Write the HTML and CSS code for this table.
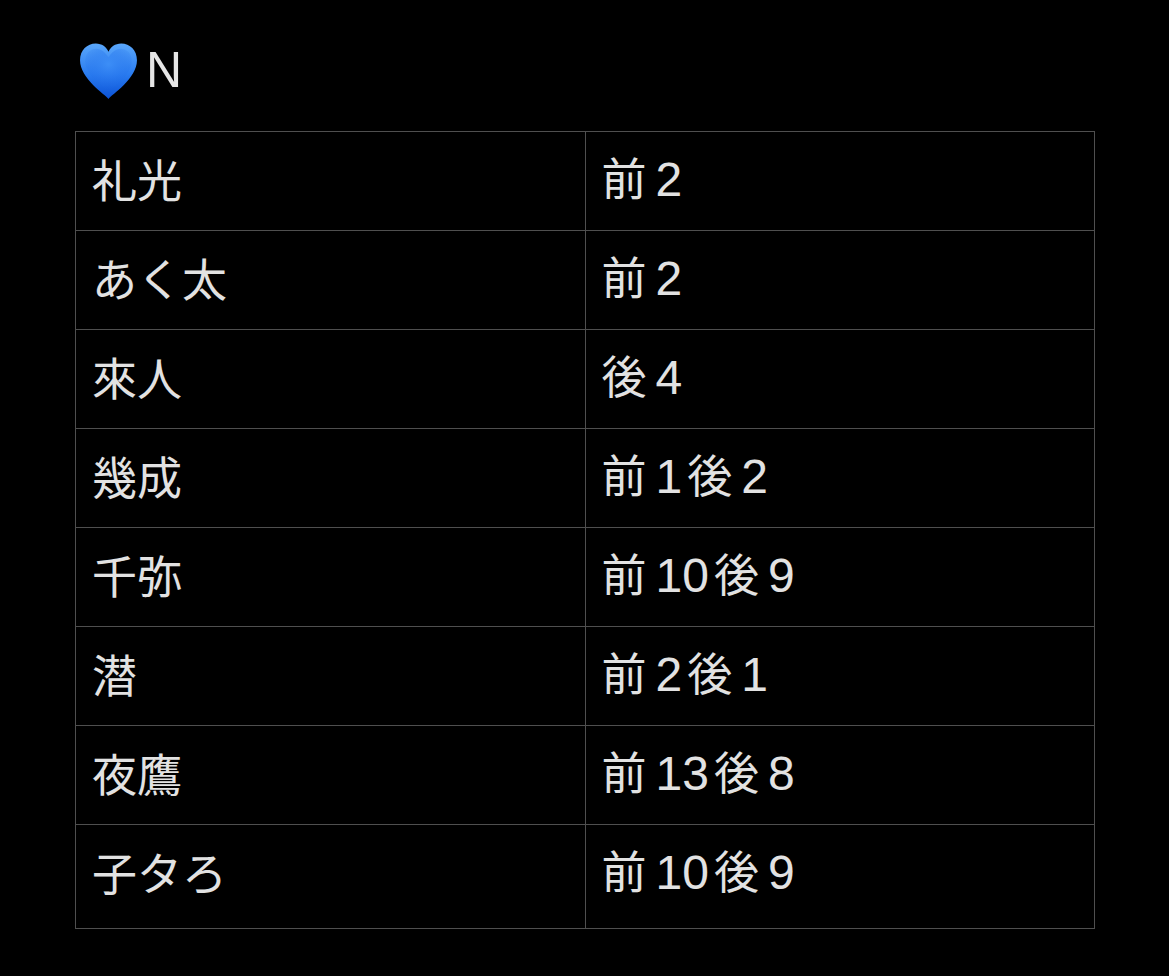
FILE: index.html
```html
<!DOCTYPE html>
<html lang="ja">
<head>
<meta charset="utf-8">
<title>N</title>
<link rel="stylesheet" href="styles.css">
</head>
<body>
<div class="page">
  <h1 class="title">
    <svg class="heart" viewBox="0 0 60 58" width="61" height="59" aria-hidden="true">
      <defs>
        <linearGradient id="hg" x1="0" y1="0" x2="0" y2="1">
          <stop offset="0" stop-color="#5aa7fb"/>
          <stop offset="0.55" stop-color="#2a7cf0"/>
          <stop offset="1" stop-color="#0b52d6"/>
        </linearGradient>
        <radialGradient id="hl" cx="0.5" cy="0.35" r="0.6">
          <stop offset="0" stop-color="#3d8ff7" stop-opacity="0.9"/>
          <stop offset="1" stop-color="#1b66e6" stop-opacity="0"/>
        </radialGradient>
      </defs>
      <path d="M30 56 C27 52 2 36 2 18 C2 8 9 1.5 17.5 1.5 C23.5 1.5 28 5 30 9.5 C32 5 36.5 1.5 42.5 1.5 C51 1.5 58 8 58 18 C58 36 33 52 30 56 Z" fill="url(#hg)"/>
      <path d="M30 50 C27 46 7 33 7 19 C7 11 12 6.5 18 6.5 C23 6.5 27 10 30 15 C33 10 37 6.5 42 6.5 C48 6.5 53 11 53 19 C53 33 33 46 30 50 Z" fill="url(#hl)"/>
    </svg><span class="title-text">N</span>
  </h1>
  <table class="list">
    <tbody>
      <tr><td>礼光</td><td>前<span class="n">2</span></td></tr>
      <tr><td>あく太</td><td>前<span class="n">2</span></td></tr>
      <tr><td>來人</td><td>後<span class="n">4</span></td></tr>
      <tr><td>幾成</td><td>前<span class="n">1</span>後<span class="n">2</span></td></tr>
      <tr><td>千弥</td><td>前<span class="n">10</span>後<span class="n">9</span></td></tr>
      <tr><td>潜</td><td>前<span class="n">2</span>後<span class="n">1</span></td></tr>
      <tr><td>夜鷹</td><td>前<span class="n">13</span>後<span class="n">8</span></td></tr>
      <tr class="last"><td>子タろ</td><td>前<span class="n">10</span>後<span class="n">9</span></td></tr>
    </tbody>
  </table>
</div>
</body>
</html>
```

FILE: styles.css
```css
html, body {
  margin: 0;
  padding: 0;
  background: #000;
}

body {
  color: #e4e4e4;
  font-family: "Liberation Sans", "Noto Sans CJK JP", sans-serif;
}

.page {
  padding: 30px 75px 0 75px;
}

.title {
  display: flex;
  align-items: center;
  height: 80px;
  margin: 0;
  padding-left: 3px;
  font-weight: normal;
  font-size: 50px;
  line-height: 1;
}

.heart {
  display: block;
  margin-top: 2px;
  margin-right: 7px;
}

.title-text {
  color: #e6e6e6;
}

.list {
  margin-top: 21px;
  border-collapse: collapse;
  width: 1020px;
  table-layout: fixed;
}

.list td {
  width: 50%;
  height: 94px;
  padding: 0 16px 4px 16px;
  border: 1px solid #4f4f4f;
  vertical-align: middle;
  font-size: 45px;
  line-height: 1.2;
  font-family: "Noto Sans CJK JP", sans-serif;
  color: #e2e2e2;
  white-space: nowrap;
}

.list .last td {
  height: 94px;
  padding-bottom: 9px;
}

.n {
  font-family: "Liberation Sans", sans-serif;
  font-size: 48px;
  margin: 0 5px 0 9px;
}
```
